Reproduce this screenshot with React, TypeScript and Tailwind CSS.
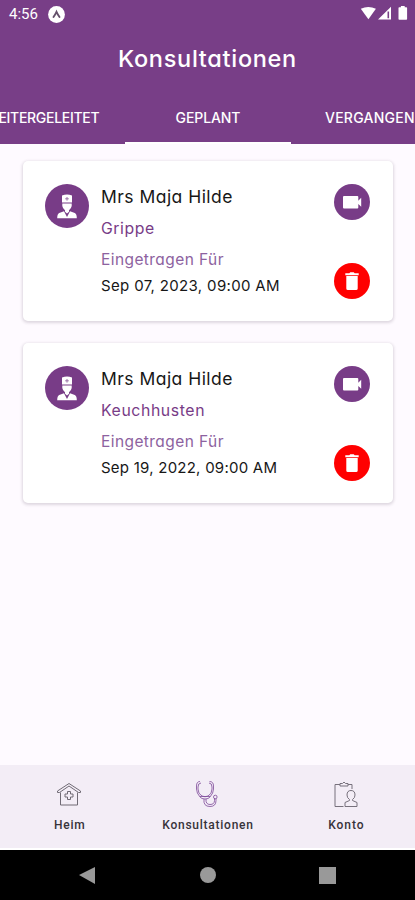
import React from "react";

type Appointment = { name: string; reason: string; date: string; reasonTrack: string; dateTrack: string };

const appointments: Appointment[] = [
  { name: "Mrs Maja Hilde", reason: "Grippe", date: "Sep 07, 2023, 09:00 AM", reasonTrack: "tracking-[0.55px]", dateTrack: "tracking-[0.34px]" },
  { name: "Mrs Maja Hilde", reason: "Keuchhusten", date: "Sep 19, 2022, 09:00 AM", reasonTrack: "tracking-[0.6px]", dateTrack: "tracking-[0.24px]" },
];

function DoctorIcon() {
  return (
    <svg viewBox="0 0 44 44" className="block size-11">
      <circle cx="22" cy="22" r="22" fill="#783c87" />
      <path d="M17 11.500Q22 9.700 27 11.500V18.600H17Z" fill="#fff" />
      <path d="M17.300 19.400h9.400v2.600q-.5 2.800-2.700 4.300v1.400L22 29.400l-2-1.700v-1.400q-2.200-1.500-2.700-4.300Z" fill="#fff" />
      <path d="M19 27.300L22 33l3-5.700 4.800 1.700q2 1 2 5.300H12.200q0-4.300 2-5.300Z" fill="#fff" />
      <path d="M22 13v3.600M20.200 14.800h3.600" stroke="#9c73a7" strokeWidth="1" fill="none" />
    </svg>
  );
}

function VideoIcon() {
  return (
    <svg viewBox="0 0 36 36" className="block size-9">
      <circle cx="18" cy="18" r="18" fill="#783c87" />
      <path d="M10 12h13.300q1 0 1 1v3.700l2.900-2.900v9l-2.900-2.900v3.700q0 1-1 1H10q-1 0-1-1V13q0-1 1-1Z" fill="#fff" />
    </svg>
  );
}

function TrashIcon() {
  return (
    <svg viewBox="0 0 36 36" className="block size-9">
      <circle cx="18" cy="18" r="18" fill="#ff0000" />
      <path d="M11.300 10.300h4l1-1.100h3.400l1 1.100h4v2H11.300ZM12.300 13h11.400v12.500q0 1.600-1.600 1.600h-8.200q-1.600 0-1.600-1.600Z" fill="#fff" />
    </svg>
  );
}

function Card({ item }: { item: Appointment }) {
  return (
    <article className="flex h-[160px] rounded-[5px] bg-white pl-[22px] pr-[23px] pt-[22px] shadow-[0_1px_3px_1px_rgba(55,35,60,0.16)]">
      <div className="pt-px"><DoctorIcon /></div>
      <div className="ml-[12px] flex-1 whitespace-nowrap pt-px">
        <h2 className="h-[25px] text-[17.5px] leading-[25px] tracking-[0.47px] text-[#171717]">{item.name}</h2>
        <p className={`mt-[9px] h-[22px] text-[15.8px] leading-[22px] text-[#783c87] ${item.reasonTrack}`}>{item.reason}</p>
        <p className="mt-[9px] h-[22px] text-[15.5px] leading-[22px] tracking-[0.42px] text-[#8d62a0]">Eingetragen Für</p>
        <p className={`mt-[4px] h-[22px] text-[15px] leading-[22px] text-[#171717] ${item.dateTrack}`}>{item.date}</p>
      </div>
      <div className="flex flex-col gap-[43px] pt-px">
        <VideoIcon />
        <TrashIcon />
      </div>
    </article>
  );
}

function NavItem({ label, track, children }: { label: string; track: string; children: React.ReactNode }) {
  return (
    <div className="flex flex-1 flex-col items-center pt-[14px]">
      {children}
      <span className={`mt-[8px] pl-px font-[Roboto] text-[12px] font-medium leading-[16px] text-[#37333a] ${track}`}>{label}</span>
    </div>
  );
}

export default function App() {
  return (
    <main className="flex h-[900px] w-[415px] flex-col overflow-hidden bg-[#fefaff] font-[Inter,'Noto_Sans',sans-serif] [font-feature-settings:'cv11']">
      <header className="flex h-[144px] flex-col bg-[#783e87] text-white">
        <div className="flex h-[28px] items-center pl-[9px] pr-[7px]">
          <span className="font-[Roboto] text-[15px] leading-none">4:56</span>
          <svg viewBox="0 0 17 17" className="ml-[10px] size-[17px]">
            <circle cx="8.5" cy="8.5" r="8.400" fill="#fff" />
            <path d="M5.500 11Q7.500 8 8.500 5.800q1 2.200 3 5.200" stroke="#65516b" strokeWidth="1.900" fill="none" strokeLinecap="round" />
          </svg>
          <svg viewBox="0 0 48 16" className="ml-auto h-4 w-12" fill="#fff">
            <path d="M.8 2.800Q8.300-1 15.900 2.800L8.400 13.300Z" />
            <path fillRule="evenodd" d="M18 13.500L31 .8v12.700ZM27.500 12.300h1.600V5.500h-1.600Z" />
            <path d="M39.300 1.300h1.600V0h3.800v1.300h1.600q.8 0 .8.800v10.800q0 .8-.8.800h-7q-.8 0-.8-.8V2.100q0-.8.8-.8Z" />
          </svg>
        </div>
        <h1 className="flex h-[62px] items-center justify-center text-[23.5px] font-medium leading-none tracking-[0.7px]">Konsultationen</h1>
        <nav className="-ml-[41px] flex h-[54px] w-[498px] shrink-0 text-[14px] font-medium">
          <div className="flex w-[166px] items-center justify-center whitespace-nowrap pt-px tracking-[-0.3px]">WEITERGELEITET</div>
          <div className="flex w-[166px] items-center justify-center border-b-2 border-white pt-[3px] tracking-[-0.1px]">GEPLANT</div>
          <div className="flex w-[166px] items-center whitespace-nowrap pl-[34px] pt-px tracking-[0.25px]">VERGANGEN</div>
        </nav>
      </header>
      <section className="flex flex-1 flex-col gap-[22px] pl-[23px] pr-[22px] pt-[17px]">
        {appointments.map((item) => <Card key={item.date} item={item} />)}
      </section>
      <footer>
        <nav className="flex h-[85px] border-b-2 border-white bg-[#f3edf6]">
          <NavItem label="Heim" track="tracking-[0.75px]">
            <svg viewBox="0 0 30 30" className="size-[30px]" fill="none" stroke="#706b75">
              <path d="M3.500 13.500V12L15 4.500 26.500 12v1.500h-2L15 7l-9.500 6.500ZM6.500 13.500V26h17V13.500" />
              <path d="M13.500 12.500h3v2.500H19v3h-2.500v2.500h-3V18H11v-3h2.500Z" />
            </svg>
          </NavItem>
          <NavItem label="Konsultationen" track="tracking-[0.75px]">
            <svg viewBox="0 0 30 30" className="size-[30px]" fill="none" stroke="#7d4a99" strokeWidth=".8">
              <path d="M8 2.500Q4.500 2.500 4.500 7v3q0 4 3.500 8 1.500 2 5 2t5-2q3.500-4 3.500-8V7q0-4.500-4-4.500M9 4Q6 4 6 8v2q0 5 4 7 3 1.500 6 0 4-2 4-7V8q0-4-3-4M8 17.500h10M12 20q-1 7.500 6 7.500 6 0 6-6v-2M14 20q-.5 5.500 4 5.500 4.500 0 4.500-4v-2" />
              <circle cx="23.300" cy="18" r="1.800" />
            </svg>
          </NavItem>
          <NavItem label="Konto" track="tracking-[0.9px]">
            <svg viewBox="0 0 30 30" className="size-[30px]" fill="none" stroke="#77717c">
              <path d="M12.500 27.500H4V5.500h5M17 5.500h4V10M9 7V4.500h2.500L13 3l1.500 1.500H17V7ZM18.500 20.500q-2.500-1.500-2.500-4.500 0-4.500 4-4.500t4 4.500q0 3-2.500 4.500v1l4.500 2v4H14v-4l4.500-2Z" />
            </svg>
          </NavItem>
        </nav>
        <div className="flex h-[50px] items-center bg-black">
          <svg viewBox="0 0 415 50" className="h-[50px] w-full" fill="#999">
            <path d="M79 25L95 17v17ZM319 17h17v17h-17Z" />
            <circle cx="208" cy="25" r="8" />
          </svg>
        </div>
      </footer>
    </main>
  );
}
